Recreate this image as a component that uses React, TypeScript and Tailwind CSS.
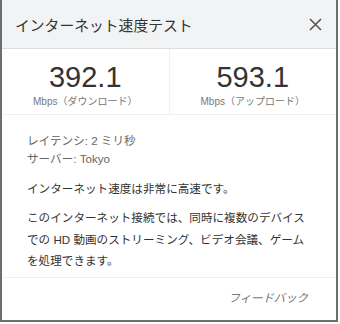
const font = {
  fontFamily: '"Liberation Sans", "Noto Sans CJK JP", sans-serif',
};

const Stat = ({ value, label }: { value: string; label: string }) => (
  <div className="flex flex-1 flex-col items-center pt-[13px]">
    <div className="text-[29px] leading-[30px] text-[#333]">{value}</div>
    <div className="mt-[4px] text-[10px] leading-[12px] text-[#777]">{label}</div>
  </div>
);

export default function App() {
  return (
    <div style={font} className="h-[324px] w-[340px] bg-white">
      <div className="flex h-[322px] w-[338px] flex-col border-x-2 border-b-2 border-[#6e6e6e]">
        {/* Header */}
        <div className="flex h-[49px] items-center justify-between border-b border-[#dadce0] bg-[#f1f3f4] pl-[13px] pr-[14px]">
          <h1 className="mt-[4px] text-[14.8px] text-[#333]">インターネット速度テスト</h1>
          <svg width="13" height="13" viewBox="0 0 13 13" className="text-[#555]">
            <path d="M1 1L12 12M12 1L1 12" stroke="currentColor" strokeWidth="1.6" />
          </svg>
        </div>

        {/* Stats */}
        <div className="flex h-[66px] border-b border-[#f0f0f0]">
          <Stat value="392.1" label="Mbps（ダウンロード）" />
          <div className="w-px bg-[#f0f0f0]" />
          <Stat value="593.1" label="Mbps（アップロード）" />
        </div>

        {/* Details */}
        <div className="flex-1 px-[25px] pt-[17px] text-[11.6px]">
          <div className="leading-[17.5px] text-[#666]">
            <p>レイテンシ: 2 ミリ秒</p>
            <p>サーバー: Tokyo</p>
          </div>
          <p className="mt-[12px] leading-[20px] text-[#333]">
            インターネット速度は非常に高速です。
          </p>
          <p className="mt-[8px] leading-[21.5px] text-[#333]">
            このインターネット接続では、同時に複数のデバイスでの HD 動画のストリーミング、ビデオ会議、ゲームを処理できます。
          </p>
        </div>

        {/* Footer */}
        <div className="flex h-[43px] items-center justify-end border-t border-[#f0f0f0] pr-[28px]">
          <span className="text-[11.4px] italic text-[#777]">フィードバック</span>
        </div>
      </div>
    </div>
  );
}
